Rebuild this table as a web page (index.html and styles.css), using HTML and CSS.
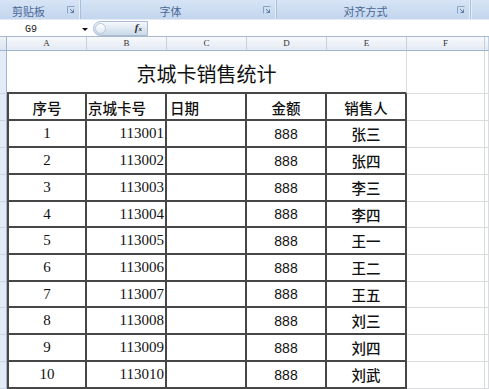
FILE: index.html
```html
<!DOCTYPE html>
<html lang="zh-CN">
<head>
<meta charset="utf-8">
<title>京城卡销售统计</title>
<link rel="stylesheet" href="styles.css">
</head>
<body>
<div class="app">
  <div class="ribbon">
    <div class="grp g1">
      <span class="glabel">剪贴板</span>
      <svg class="launch" viewBox="0 0 8 8" width="8" height="8"><path d="M0.5 7.5V0.5H7.5" fill="none" stroke="#8ea3c2"/><path d="M3 3L6.5 6.5M6.5 3.5V6.5H3.5" fill="none" stroke="#5f7ca5"/></svg>
    </div>
    <div class="grp g2">
      <span class="glabel center">字体</span>
      <svg class="launch" viewBox="0 0 8 8" width="8" height="8"><path d="M0.5 7.5V0.5H7.5" fill="none" stroke="#8ea3c2"/><path d="M3 3L6.5 6.5M6.5 3.5V6.5H3.5" fill="none" stroke="#5f7ca5"/></svg>
    </div>
    <div class="grp g3">
      <span class="glabel center">对齐方式</span>
      <svg class="launch" viewBox="0 0 8 8" width="8" height="8"><path d="M0.5 7.5V0.5H7.5" fill="none" stroke="#8ea3c2"/><path d="M3 3L6.5 6.5M6.5 3.5V6.5H3.5" fill="none" stroke="#5f7ca5"/></svg>
    </div>
    <div class="grp g4"></div>
  </div>

  <div class="formula">
    <div class="namebox"><span class="ref">G9</span><span class="arrow"></span></div>
    <div class="fxpill"><span class="knob"></span><span class="fx">f<span class="fxsub">x</span></span></div>
    <div class="finput"></div>
  </div>

  <div class="sheet">
    <div class="c corner"></div>
    <div class="c ch">A</div><div class="c ch">B</div><div class="c ch">C</div><div class="c ch">D</div><div class="c ch">E</div><div class="c ch">F</div><div class="c ch"></div>

    <div class="c rh"></div>
    <div class="c title">京城卡销售统计</div>
    <div class="c"></div><div class="c"></div>

    <div class="c rh"></div>
    <div class="c t a hd">序号</div><div class="c t l hd">京城卡号</div><div class="c t l hd pl">日期</div><div class="c t m hd">金额</div><div class="c t m hd">销售人</div><div class="c"></div><div class="c"></div>

    <div class="c rh"></div>
    <div class="c t a num">1</div><div class="c t r num">113001</div><div class="c t"></div><div class="c t m amt">888</div><div class="c t m name">张三</div><div class="c"></div><div class="c"></div>

    <div class="c rh"></div>
    <div class="c t a num">2</div><div class="c t r num">113002</div><div class="c t"></div><div class="c t m amt">888</div><div class="c t m name">张四</div><div class="c"></div><div class="c"></div>

    <div class="c rh"></div>
    <div class="c t a num">3</div><div class="c t r num">113003</div><div class="c t"></div><div class="c t m amt">888</div><div class="c t m name">李三</div><div class="c"></div><div class="c"></div>

    <div class="c rh"></div>
    <div class="c t a num">4</div><div class="c t r num">113004</div><div class="c t"></div><div class="c t m amt">888</div><div class="c t m name">李四</div><div class="c"></div><div class="c"></div>

    <div class="c rh"></div>
    <div class="c t a num">5</div><div class="c t r num">113005</div><div class="c t"></div><div class="c t m amt">888</div><div class="c t m name">王一</div><div class="c"></div><div class="c"></div>

    <div class="c rh"></div>
    <div class="c t a num">6</div><div class="c t r num">113006</div><div class="c t"></div><div class="c t m amt">888</div><div class="c t m name">王二</div><div class="c"></div><div class="c"></div>

    <div class="c rh"></div>
    <div class="c t a num">7</div><div class="c t r num">113007</div><div class="c t"></div><div class="c t m amt">888</div><div class="c t m name">王五</div><div class="c"></div><div class="c"></div>

    <div class="c rh"></div>
    <div class="c t a num">8</div><div class="c t r num">113008</div><div class="c t"></div><div class="c t m amt">888</div><div class="c t m name">刘三</div><div class="c"></div><div class="c"></div>

    <div class="c rh"></div>
    <div class="c t a num">9</div><div class="c t r num">113009</div><div class="c t"></div><div class="c t m amt">888</div><div class="c t m name">刘四</div><div class="c"></div><div class="c"></div>

    <div class="c rh"></div>
    <div class="c t a num">10</div><div class="c t r num">113010</div><div class="c t"></div><div class="c t m amt">888</div><div class="c t m name">刘武</div><div class="c"></div><div class="c"></div>
  </div>
</div>
</body>
</html>
```

FILE: styles.css
```css
* { box-sizing: border-box; }
html, body { margin: 0; padding: 0; background: #ffffff; }
body { width: 489px; height: 389px; overflow: hidden; font-family: "Noto Sans CJK SC", "Liberation Sans", sans-serif; color: #111; }
.app { width: 489px; height: 389px; overflow: hidden; }

/* ribbon group labels */
.ribbon {
  display: flex;
  height: 20px;
  background: linear-gradient(#d6e4f5, #c3d6ee);
  border-bottom: 1px solid #e3ebf5;
}
.grp {
  display: flex;
  align-items: flex-start;
  height: 19px;
  border-right: 1px solid #a7bfdc;
  box-shadow: inset -1px 0 0 #e4edf8;
}
.g1 { width: 81px; padding-left: 12px; }
.g2 { width: 196px; padding-left: 1px; }
.g3 { width: 194px; padding-left: 1px; }
.g4 { flex: 1; border-right: none; box-shadow: none; border-left: 1px solid #e4edf8; }
.glabel {
  font-size: 11px;
  line-height: 12px;
  margin-top: 5px;
  color: #4b6896;
  white-space: nowrap;
}
.glabel.center { flex: 1; text-align: center; }
.launch { margin-left: auto; margin-top: 6px; margin-right: 5px; flex: none; }
.g2 .launch, .g3 .launch { margin-left: 4px; }

/* formula bar */
.formula {
  display: flex;
  height: 17px;
  background: #ffffff;
  border-bottom: 1px solid #a9b9cc;
}
.namebox {
  width: 93px;
  display: flex;
  align-items: center;
  padding-left: 25px;
}
.ref {
  font-family: "Liberation Mono", monospace;
  font-size: 10px;
  color: #222;
  margin-top: 2px;
}
.arrow {
  margin-left: auto;
  margin-right: 5px;
  margin-top: 3px;
  width: 0; height: 0;
  border-left: 3px solid transparent;
  border-right: 3px solid transparent;
  border-top: 3px solid #111;
}
.fxpill {
  width: 55px;
  height: 15px;
  margin-top: 1px;
  display: flex;
  align-items: center;
  border: 1px solid #a9bcd4;
  border-radius: 8px 0 0 8px;
  background: linear-gradient(#f6f8fc, #dbe5f1 60%, #cad8e8);
}
.knob {
  width: 11px; height: 11px;
  margin-left: 1px;
  border-radius: 50%;
  border: 1px solid #b7c7da;
  background: linear-gradient(#ffffff, #e3eaf3);
}
.fx {
  margin-left: auto;
  margin-right: 5px;
  font-family: "Liberation Serif", serif;
  font-style: italic;
  font-weight: bold;
  font-size: 11px;
  line-height: 11px;
  color: #333;
}
.fxsub { font-size: 7px; }
.finput { flex: 1; }

/* sheet grid */
.sheet {
  display: grid;
  grid-template-columns: 7px 80px 80px 80px 80px 80px 78px 1fr;
  grid-template-rows: 14px 43px 27px 27px 27px 27px 26px 27px 27px 26px 27px 27px 27px;
}
.c {
  border-right: 1px solid #dadcdf;
  border-bottom: 1px solid #dadcdf;
  min-width: 0;
  overflow: hidden;
  white-space: nowrap;
}
.corner {
  background: linear-gradient(#eef2f8, #dbe4f0);
  border-right-color: #9eb6ce;
  border-bottom-color: #9eb6ce;
}
.ch {
  background: linear-gradient(#f7f9fc, #e4eaf3);
  border-right-color: #c3d0e0;
  border-bottom-color: #9eb6ce;
  font-family: "Liberation Serif", serif;
  font-size: 9px;
  line-height: 13px;
  text-align: center;
  color: #333;
}
.rh {
  background: #e3ebf6;
  border-right-color: #9eb6ce;
  border-bottom-color: #c6d5e8;
}
.title {
  grid-column: span 5;
  display: flex;
  align-items: center;
  justify-content: center;
  padding-top: 4px;
  font-size: 20px;
  color: #111;
  border-bottom: 2px solid #474747;
}

/* bordered table cells */
.t {
  display: flex;
  align-items: center;
  border-right: 2px solid #474747;
  border-bottom: 2px solid #474747;
  font-size: 14px;
  color: #111;
}
.t.a { border-left: 2px solid #474747; justify-content: center; }
.t.r { justify-content: flex-end; padding-right: 1px; }
.t.l { justify-content: flex-start; padding-left: 1px; }
.t.l.pl { padding-left: 3px; }
.t.m { justify-content: center; }
.hd { font-size: 14.5px; font-weight: 500; padding-top: 1px; }
.num { font-family: "Liberation Serif", serif; font-size: 15px; }
.amt { font-family: "Liberation Sans", sans-serif; font-size: 14px; }
.name { font-size: 14.5px; font-weight: 500; }
```
